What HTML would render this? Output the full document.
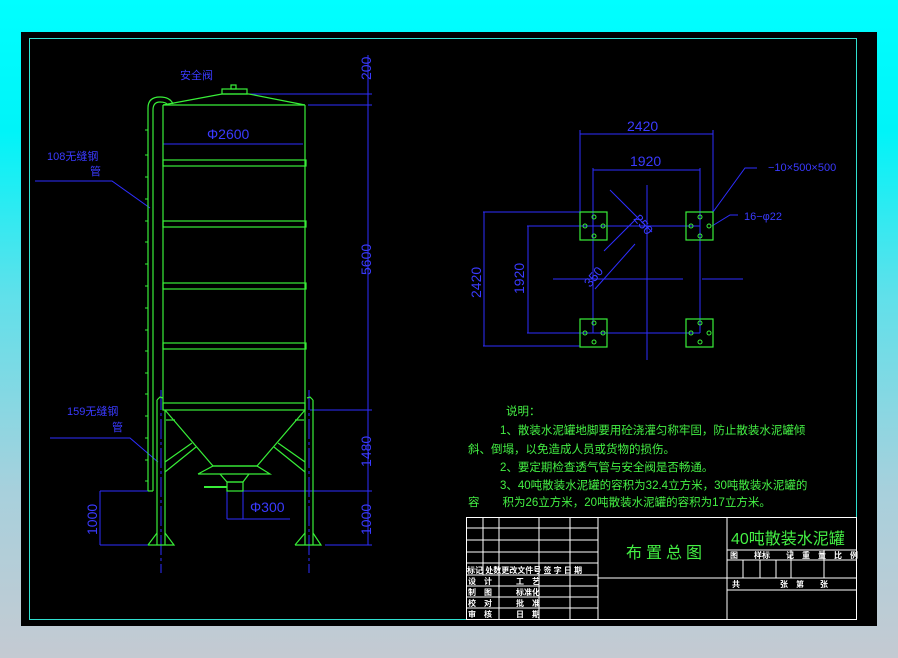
<!DOCTYPE html><html><head><meta charset="utf-8"><style>
html,body{margin:0;padding:0}
body{width:898px;height:658px;background:linear-gradient(180deg,#00ffff 0%,#00f4f8 20%,#60e0ea 45%,#a8d0dc 75%,#c4cad2 100%);position:relative;overflow:hidden;font-family:"Liberation Sans","Noto Sans CJK SC",sans-serif}
svg{position:absolute;left:0;top:0}
</style></head><body>
<svg width="898" height="658" viewBox="0 0 898 658" xmlns="http://www.w3.org/2000/svg">
<rect x="21" y="32" width="856" height="594" fill="#000"/>
<rect x="29.5" y="38.5" width="827" height="581" fill="none" stroke="#30e0d0" stroke-width="1"/>
<g fill="none" stroke="#2e2eff" stroke-width="1">
 <!-- right vertical dims -->
 <line x1="368" y1="55" x2="368" y2="545"/>
 <line x1="250" y1="94" x2="372" y2="94"/>
 <line x1="308" y1="105" x2="372" y2="105"/>
 <line x1="310" y1="410" x2="372" y2="410"/>
 <line x1="243" y1="491" x2="372" y2="491"/>
 <line x1="325" y1="545" x2="372" y2="545"/>
 <!-- phi2600 -->
 <line x1="163" y1="144" x2="303" y2="144"/>
 <!-- leaders -->
 <polyline points="35,181 112,181 150,208"/>
 <polyline points="50,438 130,438 158,462"/>
 <!-- left 1000 -->
 <line x1="100" y1="491" x2="150" y2="491"/><line x1="100" y1="545" x2="150" y2="545"/>
 <line x1="100" y1="491" x2="100" y2="545"/>
 <!-- center lines legs -->
 <line x1="161" y1="390" x2="161" y2="573" stroke-dasharray="20,3,3,3"/>
 <line x1="309" y1="390" x2="309" y2="573" stroke-dasharray="20,3,3,3"/>
 <!-- phi300 -->
 <line x1="227" y1="491" x2="227" y2="519"/><line x1="243" y1="491" x2="243" y2="519"/>
 <line x1="227" y1="519" x2="290" y2="519"/>
 <!-- plan view dims -->
 <line x1="580" y1="134" x2="713" y2="134"/>
 <line x1="580" y1="130" x2="580" y2="212"/><line x1="713" y1="130" x2="713" y2="212"/>
 <line x1="593" y1="170" x2="700" y2="170"/>
 <line x1="593" y1="168" x2="593" y2="333"/><line x1="700" y1="168" x2="700" y2="333"/>
 <line x1="593" y1="226" x2="700" y2="226"/><line x1="593" y1="333" x2="700" y2="333"/>
 <line x1="483" y1="212" x2="580" y2="212"/><line x1="483" y1="346" x2="580" y2="346"/>
 <line x1="484" y1="212" x2="484" y2="346"/>
 <line x1="527" y1="226" x2="593" y2="226"/><line x1="527" y1="333" x2="593" y2="333"/>
 <line x1="528" y1="226" x2="528" y2="333"/>
 <line x1="647" y1="185" x2="647" y2="360"/>
 <line x1="553" y1="279" x2="683" y2="279"/><line x1="702" y1="279" x2="743" y2="279"/>
 <line x1="610" y1="190" x2="652" y2="232"/>
 <line x1="635" y1="244" x2="595" y2="289"/>
 <line x1="604" y1="251" x2="640" y2="215"/>
 <polyline points="713,212 745,168 757,168"/>
 <polyline points="712,226 730,215 738,215"/>
</g>
<g fill="none" stroke="#38ee38" stroke-width="1.2">
 <!-- tank -->
 <polyline points="163,105 222,94 249,94 305,105"/>
 <rect x="222" y="89" width="25" height="5"/><rect x="231" y="85" width="5" height="4"/>
 <line x1="163" y1="105" x2="163" y2="410"/><line x1="305" y1="105" x2="305" y2="410"/>
 <line x1="163" y1="105" x2="305" y2="105"/>
 <rect x="163" y="160" width="143" height="6"/>
 <rect x="163" y="221" width="143" height="6"/>
 <rect x="163" y="283" width="143" height="6"/>
 <rect x="163" y="343" width="143" height="6"/>
 <rect x="163" y="403" width="142" height="7"/>
 <!-- pipe -->
 <path d="M148,491 L148,108 Q148,97 160,97 Q170,97 173,104"/>
 <path d="M153,491 L153,110 Q153,102 160,102 Q166,102 168,105"/>
 <line x1="148" y1="491" x2="153" y2="491"/>
 <!-- legs -->
 <line x1="157" y1="400" x2="157" y2="545"/><line x1="165" y1="410" x2="165" y2="545"/>
 <line x1="305" y1="410" x2="305" y2="545"/><line x1="313" y1="400" x2="313" y2="545"/>
 <polyline points="157,400 160,397 163,398"/><polyline points="313,400 310,397 307,398"/>
 <polyline points="148,545 174,545 165,533"/><line x1="157" y1="533" x2="148" y2="545"/>
 <polyline points="295,545 321,545 313,533"/><line x1="305" y1="533" x2="295" y2="545"/>
 <!-- cone -->
 <polyline points="165,410 213,466 257,466 305,410"/>
 <polyline points="198,474 213,466 257,466 270,474 198,474"/>
 <polyline points="220,474 227,482 243,482 249,474"/>
 <rect x="227" y="482" width="16" height="9"/>
 <line x1="204" y1="487" x2="227" y2="487" stroke-width="2"/>
 <line x1="165" y1="472" x2="196" y2="447"/><line x1="165" y1="462" x2="192" y2="443"/>
 <line x1="305" y1="472" x2="274" y2="447"/><line x1="305" y1="462" x2="278" y2="443"/>
 <line x1="166" y1="420" x2="175" y2="420"/><line x1="304" y1="420" x2="295" y2="420"/>
 <!-- plates -->
 <rect x="580" y="212" width="27" height="28"/><rect x="686" y="212" width="27" height="28"/>
 <rect x="580" y="319" width="27" height="28"/><rect x="686" y="319" width="27" height="28"/>
</g>
<g fill="none" stroke="#38ee38" stroke-width="1">
 <circle cx="594" cy="217" r="2"/><circle cx="594" cy="236" r="2"/><circle cx="585" cy="226" r="2"/><circle cx="603" cy="226" r="2"/>
 <circle cx="700" cy="217" r="2"/><circle cx="700" cy="236" r="2"/><circle cx="691" cy="226" r="2"/><circle cx="709" cy="226" r="2"/>
 <circle cx="594" cy="323" r="2"/><circle cx="594" cy="342" r="2"/><circle cx="585" cy="333" r="2"/><circle cx="603" cy="333" r="2"/>
 <circle cx="700" cy="323" r="2"/><circle cx="700" cy="342" r="2"/><circle cx="691" cy="333" r="2"/><circle cx="709" cy="333" r="2"/>
</g>
<g stroke="#38ee38" stroke-width="1">
 <line x1="145" y1="130" x2="148" y2="130"/><line x1="145" y1="155" x2="148" y2="155"/><line x1="145" y1="177" x2="148" y2="177"/><line x1="145" y1="199" x2="148" y2="199"/><line x1="145" y1="221" x2="148" y2="221"/><line x1="145" y1="242" x2="148" y2="242"/><line x1="145" y1="264" x2="148" y2="264"/><line x1="145" y1="286" x2="148" y2="286"/><line x1="145" y1="308" x2="148" y2="308"/><line x1="145" y1="330" x2="148" y2="330"/><line x1="145" y1="351" x2="148" y2="351"/><line x1="145" y1="373" x2="148" y2="373"/><line x1="145" y1="394" x2="148" y2="394"/><line x1="145" y1="416" x2="148" y2="416"/><line x1="145" y1="438" x2="148" y2="438"/><line x1="145" y1="460" x2="148" y2="460"/><line x1="145" y1="481" x2="148" y2="481"/>
</g>
<g fill="#3a3aff" font-family="Liberation Sans, Noto Sans CJK SC, sans-serif">
 <text x="180" y="79" font-size="11">安全阀</text>
 <text x="207" y="139" font-size="14">Φ2600</text>
 <text x="47" y="160" font-size="11">108无缝钢</text>
 <text x="90" y="175" font-size="11">管</text>
 <text x="67" y="415" font-size="11">159无缝钢</text>
 <text x="112" y="431" font-size="11">管</text>
 <text x="250" y="512" font-size="14">Φ300</text>
 <text font-size="14" transform="translate(371,80) rotate(-90)">200</text>
 <text font-size="14" transform="translate(371,275) rotate(-90)">5600</text>
 <text font-size="14" transform="translate(371,467) rotate(-90)">1480</text>
 <text font-size="14" transform="translate(371,535) rotate(-90)">1000</text>
 <text font-size="14" transform="translate(97,535) rotate(-90)">1000</text>
 <text x="627" y="131" font-size="14">2420</text>
 <text x="630" y="166" font-size="14">1920</text>
 <text x="768" y="171" font-size="11">−10×500×500</text>
 <text x="744" y="220" font-size="11">16−φ22</text>
 <text font-size="14" transform="translate(481,298) rotate(-90)">2420</text>
 <text font-size="14" transform="translate(524,294) rotate(-90)">1920</text>
 <text font-size="13" transform="translate(633,219) rotate(50)">250</text>
 <text font-size="13" transform="translate(590,288) rotate(-50)">350</text>
</g>
<g fill="#44f044" font-size="11.5" font-family="Liberation Sans, Noto Sans CJK SC, sans-serif">
 <text x="506" y="415">说明：</text>
 <text x="500" y="434">1、散装水泥罐地脚要用砼浇灌匀称牢固，防止散装水泥罐倾</text>
 <text x="468" y="453">斜、倒塌，以免造成人员或货物的损伤。</text>
 <text x="500" y="471">2、要定期检查透气管与安全阀是否畅通。</text>
 <text x="500" y="489">3、40吨散装水泥罐的容积为32.4立方米，30吨散装水泥罐的</text>
 <text x="468" y="506">容　　积为26立方米，20吨散装水泥罐的容积为17立方米。</text>
</g>
<g fill="none" stroke="#fff" stroke-width="1">
 <rect x="466.5" y="517.5" width="390" height="102"/>
 <line x1="598" y1="517" x2="598" y2="620"/><line x1="727" y1="517" x2="727" y2="620"/>
 <line x1="466" y1="528" x2="598" y2="528"/><line x1="466" y1="540" x2="598" y2="540"/><line x1="466" y1="552" x2="598" y2="552"/><line x1="466" y1="563" x2="598" y2="563"/><line x1="466" y1="575" x2="598" y2="575"/><line x1="466" y1="586" x2="598" y2="586"/><line x1="466" y1="597" x2="598" y2="597"/><line x1="466" y1="608" x2="598" y2="608"/>
 <line x1="483" y1="517" x2="483" y2="575"/><line x1="499" y1="517" x2="499" y2="620"/><line x1="539" y1="517" x2="539" y2="620"/><line x1="570" y1="517" x2="570" y2="620"/>
 <line x1="598" y1="578" x2="727" y2="578"/>
 <line x1="727" y1="550" x2="857" y2="550"/><line x1="727" y1="560" x2="857" y2="560"/><line x1="727" y1="578" x2="857" y2="578"/><line x1="727" y1="590" x2="857" y2="590"/>
 <line x1="743" y1="560" x2="743" y2="578"/><line x1="760" y1="560" x2="760" y2="578"/><line x1="776" y1="560" x2="776" y2="578"/><line x1="791" y1="550" x2="791" y2="578"/><line x1="824" y1="550" x2="824" y2="578"/>
</g>
<g fill="#fff" font-size="8" font-weight="bold" font-family="Liberation Sans, Noto Sans CJK SC, sans-serif">
 <text x="467" y="573">标记 处数更改文件号 签 字 日 期</text>
 <text x="468" y="584">设　计　　　工　艺</text>
 <text x="468" y="595">制　图　　　标准化</text>
 <text x="468" y="606">校　对　　　批　准</text>
 <text x="468" y="617">审　核　　　日　期</text>
 <text x="730" y="558">图　　样标　　记　重　量　比　例</text>
 <text x="732" y="587">共　　　　　张　第　　张</text>
</g>
<text x="626" y="558" fill="#44f044" font-size="16" font-family="Liberation Sans, Noto Sans CJK SC, sans-serif" letter-spacing="4">布置总图</text>
<text x="731" y="544" fill="#44f044" font-size="16" font-family="Liberation Sans, Noto Sans CJK SC, sans-serif">40吨散装水泥罐</text>
</svg>
</body></html>
